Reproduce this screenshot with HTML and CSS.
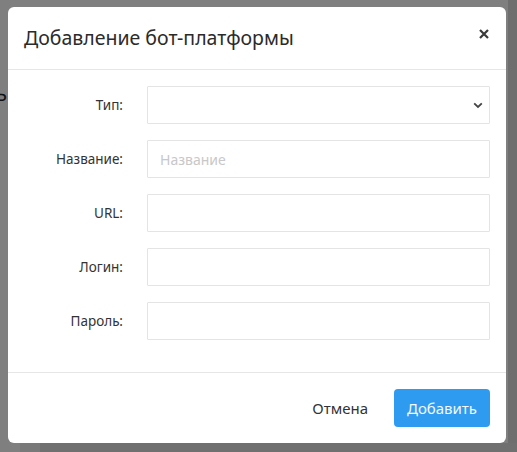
FILE: index.html
```html
<!DOCTYPE html>
<html lang="ru">
<head>
<meta charset="utf-8">
<title>Добавление бот-платформы</title>
<link rel="stylesheet" href="styles.css">
</head>
<body>
<div class="page">
  <div class="page-text">ь</div>
  <div class="page-side"></div>
  <div class="page-bottom"><div class="page-bottom-a"></div><div class="page-bottom-b"></div></div>
</div>
<div class="backdrop"></div>
<div class="modal">
  <div class="modal-header">
    <h4 class="modal-title">Добавление бот-платформы</h4>
    <button class="close" type="button" aria-label="Закрыть">
      <svg width="10" height="10" viewBox="0 0 10 10"><path d="M1 1 L9 9 M9 1 L1 9" stroke="#3a3a3a" stroke-width="2.2" fill="none"/></svg>
    </button>
  </div>
  <form class="modal-body">
    <div class="form-row">
      <label class="form-label">Тип:</label>
      <div class="select-wrap">
        <select class="form-control"></select>
        <svg class="chev" width="10" height="7" viewBox="0 0 10 7"><path d="M1.2 1.3 L5 5 L8.8 1.3" fill="none" stroke="#444" stroke-width="1.8"/></svg>
      </div>
    </div>
    <div class="form-row">
      <label class="form-label">Название:</label>
      <input class="form-control" type="text" placeholder="Название">
    </div>
    <div class="form-row">
      <label class="form-label">URL:</label>
      <input class="form-control" type="text">
    </div>
    <div class="form-row">
      <label class="form-label">Логин:</label>
      <input class="form-control" type="text">
    </div>
    <div class="form-row">
      <label class="form-label">Пароль:</label>
      <input class="form-control" type="password">
    </div>
  </form>
  <div class="modal-footer">
    <button class="btn btn-link" type="button">Отмена</button>
    <button class="btn btn-primary" type="button">Добавить</button>
  </div>
</div>
</body>
</html>
```

FILE: styles.css
```css
* { box-sizing: border-box; }
html, body { margin: 0; padding: 0; }
body {
  width: 517px;
  height: 452px;
  overflow: hidden;
  font-family: "Noto Sans", "Open Sans", sans-serif;
  color: #333;
  position: relative;
}
.page {
  width: 517px;
  height: 452px;
  background: #fefefe;
  position: relative;
}
.page-text {
  position: absolute;
  left: -4px;
  top: 80px;
  font-size: 20px;
  color: #222;
}
.page-side {
  position: absolute;
  right: 0;
  top: 0;
  width: 9px;
  height: 452px;
  background: #dcdcdc;
}
.page-bottom {
  position: absolute;
  left: 0;
  bottom: 0;
  width: 517px;
  height: 9px;
  display: flex;
}
.page-bottom-a { width: 20px; background: #fefefe; }
.page-bottom-b { width: 20px; background: #f2f2f2; }
.page-bottom::after { content: ""; flex: 1; background: #e0e0e0; }
.backdrop {
  position: absolute;
  inset: 0;
  background: rgba(0,0,0,0.5);
}
.modal {
  position: absolute;
  left: 8px;
  top: 7px;
  width: 498px;
  height: 436px;
  background: #fff;
  border-radius: 6px;
  display: flex;
  flex-direction: column;
}
.modal-header {
  height: 63px;
  padding: 16px;
  border-bottom: 1px solid #e6e6e6;
  display: flex;
  align-items: center;
  justify-content: space-between;
}
.modal-title {
  margin: 0;
  font-size: 19.5px;
  font-weight: 400;
  line-height: 30px;
  color: #2b2b2b;
}
.close {
  border: 0;
  background: none;
  padding: 0;
  margin-top: -8px;
  margin-right: 1px;
  width: 10px;
  height: 10px;
  display: flex;
  cursor: pointer;
}
.modal-body {
  margin: 0;
  padding: 16px 16px 32px;
  display: flex;
  flex-direction: column;
  gap: 16px;
  height: 309px;
  border-bottom: 1px solid #e6e6e6;
}
.form-row {
  display: grid;
  grid-template-columns: 99px 343px;
  column-gap: 24px;
  align-items: center;
  height: 38px;
}
.form-label {
  text-align: right;
  font-size: 13.5px;
  color: #333;
}
.form-control {
  width: 343px;
  height: 38px;
  border: 1px solid #e4e4e4;
  border-radius: 1px;
  background: #fff;
  padding: 0 12px;
  font-family: inherit;
  font-size: 14px;
  color: #333;
  outline: none;
}
.form-control::placeholder { color: #c8c8c8; }
.select-wrap { position: relative; width: 343px; height: 38px; }
select.form-control { appearance: none; -webkit-appearance: none; }
.chev {
  position: absolute;
  right: 7px;
  top: 16px;
  pointer-events: none;
}
.modal-footer {
  flex: 1;
  padding: 16px;
  display: flex;
  justify-content: flex-end;
  align-items: flex-start;
  gap: 14px;
}
.btn {
  height: 38px;
  border: 0;
  border-radius: 4px;
  font-family: inherit;
  font-size: 15px;
  padding: 0 12px;
  cursor: pointer;
}
.btn-link {
  background: none;
  color: #333;
}
.btn-primary {
  width: 96px;
  background: #2e9bf0;
  color: #f4f9fe;
}
```
